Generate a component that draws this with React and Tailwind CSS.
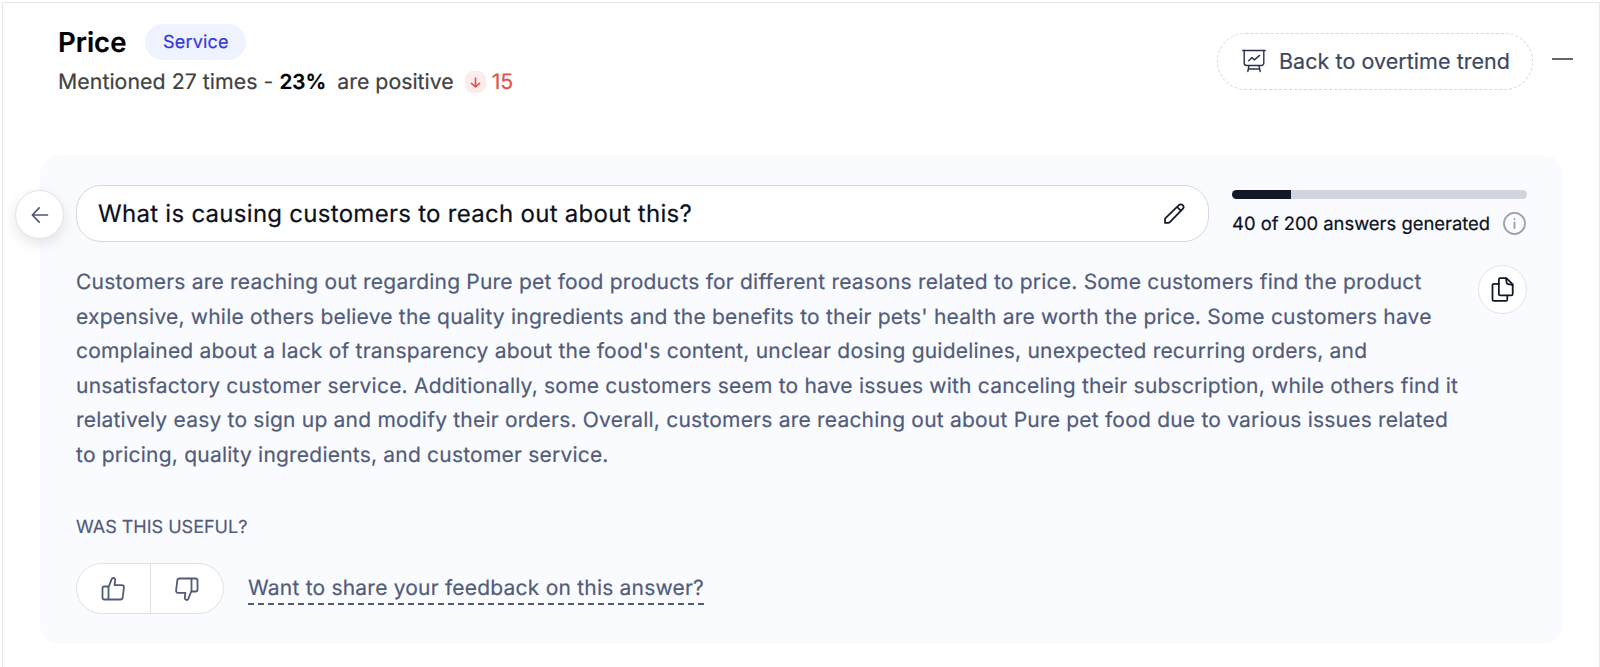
import React from 'react';

const answerLines = [
  'Customers are reaching out regarding Pure pet food products for different reasons related to price. Some customers find the product',
  "expensive, while others believe the quality ingredients and the benefits to their pets' health are worth the price. Some customers have",
  "complained about a lack of transparency about the food's content, unclear dosing guidelines, unexpected recurring orders, and",
  'unsatisfactory customer service. Additionally, some customers seem to have issues with canceling their subscription, while others find it',
  'relatively easy to sign up and modify their orders. Overall, customers are reaching out about Pure pet food due to various issues related',
  'to pricing, quality ingredients, and customer service.',
];

function Svg({ className, strokeWidth = 1.5, children }) {
  return (
    <svg
      viewBox="0 0 24 24"
      fill="none"
      stroke="currentColor"
      strokeWidth={strokeWidth}
      strokeLinecap="round"
      strokeLinejoin="round"
      className={className}
    >
      {children}
    </svg>
  );
}

function BoardIcon() {
  return (
    <Svg className="h-6 w-6 shrink-0 text-[#25314f]" strokeWidth={1.4}>
      <path d="M.8 1.5h22.4" />
      <path d="M2.2 1.5V14a2.5 2.5 0 0 0 2.5 2.5h14.6a2.5 2.5 0 0 0 2.5-2.5V1.5" />
      <path d="M7 16.7 5.8 22.5M17 16.7l1.2 5.8M6.500 20h11" />
      <path d="m6.8 11.800 3.200-3.200 2.400 2.300 5.200-4.500" />
    </Svg>
  );
}

function ThumbIcon({ className }) {
  return (
    <Svg className={className} strokeWidth={1.8}>
      <path d="M7.800 9.500 10.700 2.200c.3-.8.800-1.200 1.500-1.200 1.400 0 2.200 1.100 2 2.400l-.6 4.800h7.300c1.400 0 2.200 1.100 2 2.500l-1.200 9.800c-.2 1.300-1 2-2.200 2H3.200c-1 0-1.700-.7-1.700-1.700v-9.600c0-1 .7-1.700 1.700-1.700h4.600Z" />
      <path d="M7.500 9.700v12.600" />
    </Svg>
  );
}

function Header() {
  return (
    <div className="flex items-start justify-between pl-[55px] pr-[26px] pt-[21px]">
      <div>
        <div className="flex items-center gap-[19px]">
          <h2 className="text-[27.5px] font-semibold leading-[36px] text-black">Price</h2>
          <span className="flex h-[36px] w-[101px] items-center justify-center rounded-full bg-[#eef3ff] text-[18px] tracking-[0.2px] text-[#3538dc]">
            Service
          </span>
        </div>
        <div className="mt-[6px] flex items-center whitespace-pre text-[21.3px] leading-[32px] text-[#414141]">
          <span className="tracking-[0.05px]">Mentioned 27 times - </span>
          <span className="text-[20.7px] font-semibold text-black">23%</span>
          <span className="ml-[11px]">are positive</span>
          <span className="ml-[11px] flex h-[22px] w-[21px] items-center justify-center rounded-lg bg-[#fceceb] text-[#e0524a]">
            <Svg className="h-[13px] w-[13px]" strokeWidth={3}>
              <path d="M12 4v16M4.500 13.500l7.500 6.500 7.500-6.500" />
            </Svg>
          </span>
          <span className="ml-[6px] text-[#e0524a]">15</span>
        </div>
      </div>
      <div className="mt-[9px] flex items-start gap-[19px]">
        <button className="flex h-[57px] w-[316px] items-center rounded-full border border-dashed border-[#d3d6de] pb-px pl-[24px] text-[21.5px] text-[#3b4863]">
          <BoardIcon />
          <span className="ml-[13px] whitespace-nowrap tracking-[0.05px]">Back to overtime trend</span>
        </button>
        <span className="mt-[25px] h-[2px] w-[21px] bg-[#666]" />
      </div>
    </div>
  );
}

function Progress() {
  return (
    <div className="w-[295px] pt-[5px]">
      <div className="h-[9px] overflow-hidden rounded-full bg-[#d1d5de]">
        <div className="h-full bg-[#111827]" style={{ width: `${(40 / 200) * 100}%` }} />
      </div>
      <div className="mt-[12px] flex items-center justify-between">
        <span className="whitespace-nowrap pt-px text-[18.4px] leading-[24px] text-[#0b1020]">40 of 200 answers generated</span>
        <Svg className="mr-px h-[23px] w-[23px] shrink-0 text-[#9ca0aa]" strokeWidth={1.9}>
          <circle cx="12" cy="12" r="11" />
          <path d="M12 10.8v6M12 7.3v.2" />
        </Svg>
      </div>
    </div>
  );
}

export default function App() {
  return (
    <div className="h-[667px] w-[1600px] overflow-hidden bg-white pl-[3px] pt-[2px] font-[Inter,sans-serif] [text-rendering:geometricPrecision] [-webkit-text-stroke:0.2px]">
      <div className="-ml-px h-[666px] w-[1598px] border-l border-r border-t border-[#e8e8e8]">
        <Header />
        <div className="relative ml-[37px] mt-[57px] h-[489px] w-[1523px] rounded-[20px] bg-[#fafbff] pl-[36px] pr-[36px] pt-[30px]">
          <button className="absolute left-[-25px] top-[35px] flex h-[49px] w-[49px] items-center justify-center rounded-full border border-[#e1e3e8] bg-white text-[#4c5675] shadow-[0_5px_14px_rgba(0,0,0,0.1)]">
            <Svg className="h-[20px] w-[20px]" strokeWidth={2}>
              <path d="M21 12H3M11 3.500 2.800 12l8.200 8.500" />
            </Svg>
          </button>
          <div className="flex justify-between">
            <div className="flex h-[57px] w-[1133px] items-center justify-between rounded-[25px] border border-[#d5d8df] bg-white pl-[21px] pr-[23px]">
              <span className="pt-px text-[24px] tracking-[0.28px] text-[#0b1020]">What is causing customers to reach out about this?</span>
              <Svg className="h-[22px] w-[22px] text-[#111827]" strokeWidth={1.9}>
                <path d="M2.200 21.800v-3.700c0-.7.300-1.400.8-1.900L17.300 2.300a2.900 2.900 0 0 1 4.200 4.200L7.500 20.800c-.5.5-1.200.8-1.900.8ZM15.300 4.300l4.300 4.300" />
              </Svg>
            </div>
            <Progress />
          </div>
          <div className="mt-[23px] flex items-start justify-between">
            <p className="whitespace-nowrap pt-px text-[21px] leading-[34.5px] tracking-[0.21px] text-[#515b7a]">
              {answerLines.map((line) => (
                <span key={line} className="block">{line}</span>
              ))}
            </p>
            <button className="flex h-[49px] w-[49px] shrink-0 items-center justify-center rounded-full border border-[#e3e4e8] bg-white text-[#111827]">
              <Svg className="h-[25px] w-[25px]" strokeWidth={1.7}>
                <path d="M8.500 2.500c0-.8.600-1.400 1.400-1.400h5.800l6.100 6v9.100c0 .8-.6 1.400-1.400 1.400H9.900c-.8 0-1.400-.6-1.400-1.400Z" />
                <path d="M15 1.300c1.300 1.200.3 3.800 1.400 5 1 1.100 4 .3 5.200 1.500" />
                <path d="M8.300 6.500H3.800c-.8 0-1.400.6-1.400 1.400v13.700c0 .8.600 1.400 1.400 1.400h11.400c.8 0 1.400-.6 1.400-1.400v-3.800" />
              </Svg>
            </button>
          </div>
          <div className="mt-[41px] text-[18px] leading-[28px] text-[#515b7a]">WAS THIS USEFUL?</div>
          <div className="mt-[21px] flex items-center text-[#515b7a]">
            <div className="flex h-[51px] w-[148px] rounded-full border border-[#e0e2e2] bg-white">
              <button className="flex w-[74px] items-center justify-center border-r border-[#e0e2e2] pr-px">
                <ThumbIcon className="h-[24px] w-[24px]" />
              </button>
              <button className="flex w-[72px] items-center justify-center">
                <ThumbIcon className="h-[24px] w-[24px] rotate-180" />
              </button>
            </div>
            <a className="ml-[24px] whitespace-nowrap border-b-2 border-dashed border-[#515b7a] pt-[2px] text-[21px] leading-[28px] tracking-[0.21px]">
              Want to share your feedback on this answer?
            </a>
          </div>
        </div>
      </div>
    </div>
  );
}
